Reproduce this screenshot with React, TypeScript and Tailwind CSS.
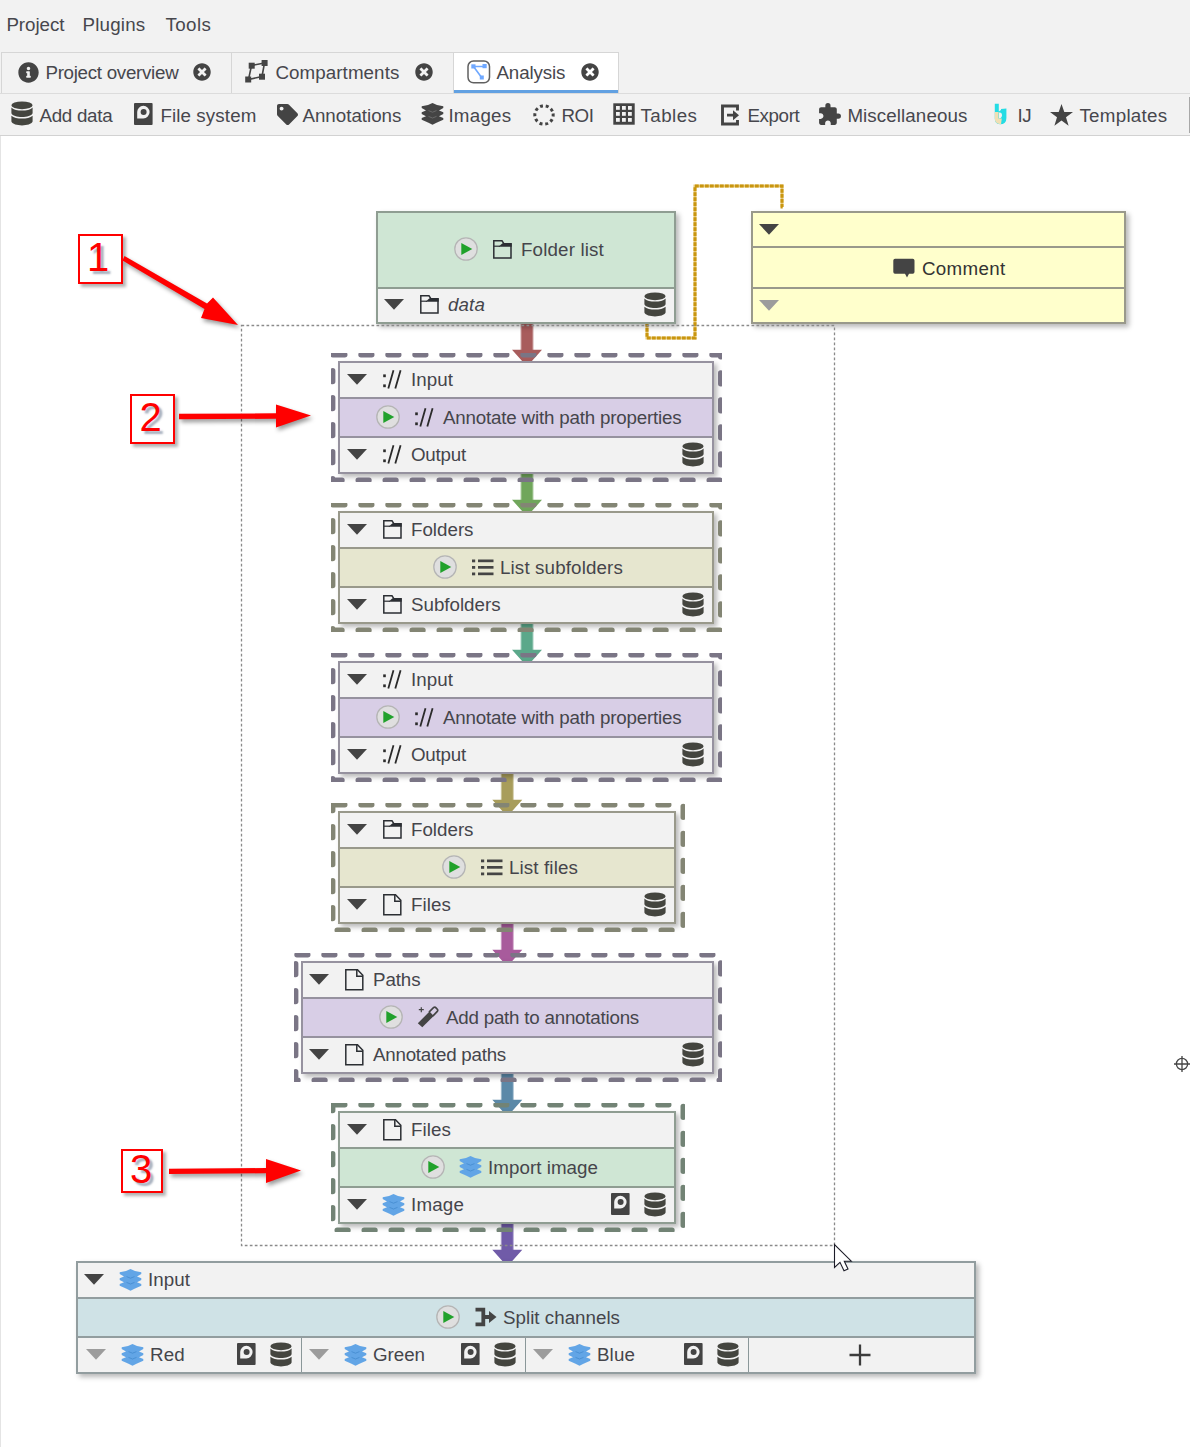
import React, { useLayoutEffect, useRef } from "react";
import { FaInfoCircle, FaTimesCircle, FaTag } from "react-icons/fa";
import { MdExtension } from "react-icons/md";

const INK = "#444444";

/** One line of text, tracked so that it fills the given width. */
function Label({ w, children, className = "" }: { w: number; children: string; className?: string }) {
  const ref = useRef<HTMLSpanElement>(null);
  useLayoutEffect(() => {
    const el = ref.current;
    if (!el) return;
    el.style.letterSpacing = "0px";
    const natural = el.getBoundingClientRect().width;
    el.style.letterSpacing = `${(w + 1 - natural) / children.length}px`;
  }, [w, children]);
  return (
    <span ref={ref} className={`-ml-[0.6px] shrink-0 whitespace-pre text-[18.75px] leading-[24px] ${className}`}>
      {children}
    </span>
  );
}

/* ---------- icons ---------- */

function DbIcon() {
  return (
    <svg width="22" height="25" viewBox="0 0 22 25" className="mb-[2px] shrink-0" fill="#44453f">
      <ellipse cx="11" cy="4.3" rx="10.6" ry="3.9" />
      <path d="M.4 6.5C2.5 9 6.8 9.5 11 9.500S19.500 9 21.600 6.500V12.300C20.500 14.800 16 16 11 16S1.500 14.800.4 12.300Z" />
      <path d="M.4 14.800C2.500 17 6.800 17.600 11 17.600S19.500 17 21.600 14.800V20.600C20.500 23.200 16 24.400 11 24.400S1.500 23.200.4 20.600Z" />
    </svg>
  );
}
function SaveIcon() {
  return (
    <svg width="19" height="22" viewBox="0 0 19 22" className="mb-[2px] shrink-0">
      <rect x="0" y="0" width="18.600" height="22" rx="1" fill={INK} />
      <path d="M9.300 2.800a6.200 6.200 0 0 1 0 12.600H3.200V9A6.200 6.200 0 0 1 9.300 2.800Z" fill="#f2f2f2" />
      <circle cx="9.600" cy="9" r="3" fill={INK} />
    </svg>
  );
}
function FolderIcon() {
  return (
    <svg width="19" height="19" viewBox="0 0 19 19" className="mr-[2px] mb-[1px] shrink-0">
      <path d="M.8.8H9L11 3.800H18V18H.8Z" fill="none" stroke="#2b2e33" strokeWidth="1.500" />
      <path d="M5.500 6.800 9.500 3.200H18.700V6.800Z" fill="#2b2e33" />
      <path d="M.8 6.200H7" fill="none" stroke="#2b2e33" strokeWidth="1.200" />
    </svg>
  );
}
function FileIcon() {
  return (
    <svg width="19" height="22" viewBox="0 0 19 22" className="mr-[2px] mb-[1px] shrink-0" fill="none" stroke="#2b2e33" strokeWidth="1.500">
      <path d="M.8.8H12.500L17.800 6.300V20.800H.8Z" />
      <path d="M11.800 1V7.200H18" />
    </svg>
  );
}
function PathIcon() {
  return (
    <svg width="20" height="20" viewBox="0 0 20 20" className="mr-[4px] mb-[2px] shrink-0" stroke="#2b2b2b" fill="#2b2b2b">
      <rect x="1.200" y="5.400" width="2.600" height="2.800" stroke="none" />
      <rect x="1.200" y="15.400" width="2.600" height="2.800" stroke="none" />
      <path d="M6.300 19.500 11.500 1.200M13.300 19.500 18.600 1.200" strokeWidth="1.800" fill="none" />
    </svg>
  );
}
function LayersIcon({ dark = false }: { dark?: boolean }) {
  const face = dark ? "#444" : "#62a5e6";
  const edge = dark ? "#777" : "#3f86cc";
  return (
    <svg width="23" height="22" viewBox="0 0 23 22" className="mb-[1px] shrink-0">
      <path
        d="M11.500 0 16 2 22.300 3.300V5L18 7.400 22.300 9.200V11L18 13.200 22.300 15V16.700L16 19.500 11.500 21.700 7 19.500 .7 16.700V15L5 13.200 .7 11V9.200L5 7.400 .7 5V3.300L7 2Z"
        fill={face}
      />
      <path d="M7.500 7.600 11.500 9.200 15.500 7.600M7.500 13.400 11.500 15 15.500 13.400" fill="none" stroke={edge} strokeWidth=".7" />
    </svg>
  );
}
function ListIcon() {
  return (
    <svg width="22" height="17" viewBox="0 0 22 17" className="mb-[1px] shrink-0" fill={INK}>
      {[0.5, 7, 13.5].map((y) => (
        <g key={y}>
          <rect x="0" y={y} width="3.200" height="2.800" />
          <rect x="6" y={y} width="15.500" height="2.700" />
        </g>
      ))}
    </svg>
  );
}
function WandIcon() {
  return (
    <svg width="22" height="22" viewBox="0 0 22 22" className="mr-[2px] mb-[2px] shrink-0">
      <path d="M.8 17.300 12.500 5.600 16.800 9.900 5.300 21.300Z" fill={INK} />
      <path d="M12 6.200 16.700 1.500Q18 .8 19 1.800L20.300 3.200Q21.200 4.300 20.300 5.400L16 9.800" fill="none" stroke={INK} strokeWidth="1.700" />
      <path d="M4.300 1.200V6.200M1.800 3.700H6.800" stroke={INK} strokeWidth="1.200" />
    </svg>
  );
}
function SplitIcon() {
  return (
    <svg width="22" height="20" viewBox="0 0 22 20" className="mb-[2px] shrink-0">
      <path d="M.5 2.700H8.300V17.300H.5M8 10H16" fill="none" stroke={INK} strokeWidth="3.800" />
      <path d="M14 4V16L21.500 10Z" fill={INK} />
    </svg>
  );
}
function CommentIcon() {
  return (
    <svg width="22" height="20" viewBox="0 0 22 20" className="shrink-0" fill={INK}>
      <path d="M2 .8H19.800Q21.400 1 21.500 2.600V14Q21.400 15.600 19.800 15.800H16L14 19.400 12 15.800H2Q.4 15.600.3 14V2.600Q.4 1 2 .8Z" />
    </svg>
  );
}
function PlayIcon() {
  return (
    <svg width="24" height="24" viewBox="0 0 24 24" className="mb-[2px] shrink-0">
      <circle cx="12" cy="12" r="11.200" fill="#dfdfdf" stroke="#b5b5b5" strokeWidth="1.300" />
      <path d="M7.300 5.900V18.100L18.300 12Z" fill="#21a12b" />
    </svg>
  );
}
function Triangle({ dim = false }: { dim?: boolean }) {
  return (
    <svg width="20" height="11" viewBox="0 0 20 11" className="mb-px shrink-0">
      <path d="M0 0H20L10 10.700Z" fill={dim ? "#9c9c9c" : INK} />
    </svg>
  );
}
function CompartmentsIcon() {
  return (
    <svg width="23" height="23" viewBox="0 0 23 23" className="mb-[3px] shrink-0">
      <path d="M6.500 5.500 19.500 3 17 16.500 3.500 19.500Z" fill="none" stroke={INK} strokeWidth="1.600" />
      <g fill={INK}>
        <rect x="3.700" y="2.700" width="6" height="6" />
        <rect x="16.600" y="0" width="6" height="6" />
        <rect x="14" y="13.700" width="6" height="6" />
        <rect x=".2" y="16.500" width="6" height="6" />
      </g>
    </svg>
  );
}
function AnalysisIcon() {
  return (
    <svg width="24" height="24" viewBox="0 0 24 24" className="mb-[2px] shrink-0">
      <rect x="1" y="1" width="21.500" height="21.800" rx="5.500" fill="#fff" stroke="#606060" strokeWidth="1.500" />
      <path d="M6.500 6.500H17M6.500 6.500 14.800 17.800" stroke="#6fa8ff" strokeWidth="1.600" />
      <g fill="#6fa8ff">
        <rect x="4.300" y="4.300" width="4.200" height="4.200" />
        <rect x="15.500" y="4" width="4.200" height="4.200" />
        <rect x="12.800" y="15.500" width="4" height="4" />
      </g>
    </svg>
  );
}
function RoiIcon() {
  return (
    <svg width="22" height="22" viewBox="0 0 22 22" className="shrink-0">
      <circle cx="11" cy="11" r="9.200" fill="none" stroke={INK} strokeWidth="3" strokeDasharray="3 2.780" transform="rotate(-9 11 11)" />
    </svg>
  );
}
function TableIcon() {
  return (
    <svg width="22" height="22" viewBox="0 0 22 22" className="mb-px shrink-0">
      <rect x=".3" y=".3" width="21.400" height="21.400" fill={INK} />
      {[3, 9, 15].map((y) => [3, 9, 15].map((x) => <rect key={`${x}-${y}`} x={x} y={y} width="3.800" height="3.800" fill="#f2f2f2" />))}
    </svg>
  );
}
function ExportIcon() {
  return (
    <svg width="20" height="22" viewBox="0 0 20 22" className="-ml-px mr-px shrink-0">
      <path d="M17.500 6.500V2H2.500V20H17.500V16" fill="none" stroke={INK} strokeWidth="2.900" />
      <path d="M7 9.800H13V6.200L19 11.200 13 16.200V12.600H7Z" fill={INK} />
    </svg>
  );
}
function IjIcon() {
  return (
    <svg width="13" height="22" viewBox="0 0 13 22" className="mb-px shrink-0">
      <path d="M.8.8H4.800V8.500L7 7V6L12.400 5.500V15Q12.400 21.300 6 21.300.8 21 .8 15.500Z" fill="#25dce4" />
      <path d="M5 9.500Q8 9 8 12.500 7.500 15.500 5 15.500Z" fill="#f2f2f2" />
      <path d="M.8 9H4.600V15.500H7.800L7 21.200Q.8 21 .8 15.500Z" fill="#f0dfb4" />
    </svg>
  );
}
function StarIcon() {
  return (
    <svg width="23" height="22" viewBox="0 0 23 22" className="shrink-0">
      <path d="M11.500 0 14.300 8H23L16 13.200 18.600 21.700 11.500 16.600 4.400 21.700 7 13.200 0 8H8.700Z" fill={INK} />
    </svg>
  );
}

/* ---------- header ---------- */

const TOOLS: { text: string; w: number; box: string; icon: React.ReactNode; gap: string }[] = [
  { text: "Add data", w: 72, box: "w-[123px]", icon: <DbIcon />, gap: "gap-[7px]" },
  { text: "File system", w: 95, box: "w-[143px]", icon: <SaveIcon />, gap: "gap-[8px]" },
  { text: "Annotations", w: 98, box: "w-[144px]", icon: <FaTag size={21} color={INK} />, gap: "gap-[5px]" },
  { text: "Images", w: 62, box: "w-[112px]", icon: <LayersIcon dark />, gap: "gap-[5px]" },
  { text: "ROI", w: 31, box: "w-[80px]", icon: <RoiIcon />, gap: "gap-[7px]" },
  { text: "Tables", w: 56, box: "w-[108px]", icon: <TableIcon />, gap: "gap-[6px]" },
  { text: "Export", w: 51, box: "w-[96px]", icon: <ExportIcon />, gap: "gap-[7px]" },
  { text: "Miscellaneous", w: 119, box: "w-[177px]", icon: <MdExtension size={25} color={INK} />, gap: "gap-[6px]" },
  { text: "IJ", w: 13, box: "w-[56px]", icon: <IjIcon />, gap: "gap-[11px]" },
  { text: "Templates", w: 87, box: "w-[120px]", icon: <StarIcon />, gap: "gap-[7px]" },
];

function Header() {
  return (
    <header className="bg-[#f2f2f2]">
      <nav className="flex h-[52px] items-center pb-[2px] pl-[7px]">
        <div className="w-[76px]"><Label w={57}>Project</Label></div>
        <div className="w-[83px]"><Label w={62}>Plugins</Label></div>
        <div><Label w={45}>Tools</Label></div>
      </nav>
      <div className="flex h-[42px] border-b border-[#dcdcdc] pl-px">
        <div className="flex w-[230px] items-center border-t border-l border-[#d6d6d6] pl-[16px]">
          <FaInfoCircle size={21} color={INK} className="mb-[2px]" />
          <div className="ml-[7px] w-[147px]"><Label w={132}>Project overview</Label></div>
          <FaTimesCircle size={18} color={INK} className="mb-[2px]" />
        </div>
        <div className="flex w-[222px] items-center border-t border-l border-[#d6d6d6] pl-[13px]">
          <CompartmentsIcon />
          <div className="ml-[8px] w-[139px]"><Label w={123}>Compartments</Label></div>
          <FaTimesCircle size={18} color={INK} className="mb-[2px]" />
        </div>
        <div className="flex w-[166px] items-center border-x border-t border-[#d6d6d6] bg-white pl-[13px] shadow-[inset_0_-3px_0_#62a1e2]">
          <AnalysisIcon />
          <div className="ml-[6px] w-[84px]"><Label w={68}>Analysis</Label></div>
          <FaTimesCircle size={18} color={INK} className="mb-[2px]" />
        </div>
      </div>
      <div className="flex h-[42px] items-center border-b border-[#d2d2d2] pl-[11px]">
        {TOOLS.map((t) => (
          <div key={t.text} className={`flex shrink-0 items-center ${t.box} ${t.gap}`}>
            {t.icon}
            <Label w={t.w} className="pt-[2px]">{t.text}</Label>
          </div>
        ))}
        <div className="ml-[19px] h-[36px] w-px bg-[#a8a8a8]" />
      </div>
    </header>
  );
}

/* ---------- nodes ---------- */

function Slot({ icon, text, w, italic }: { icon: React.ReactNode; text: string; w: number; italic?: boolean }) {
  return (
    <>
      <div className="flex w-[23px] shrink-0 items-center justify-center">{icon}</div>
      <Label w={w} className={`ml-[6px] text-[#45454b] ${italic ? "italic" : ""}`}>{text}</Label>
    </>
  );
}

function SlotRow({ dim, icon, text, w, italic, save, db, className = "" }: {
  dim?: boolean; icon?: React.ReactNode; text?: string; w?: number; italic?: boolean; save?: boolean; db?: boolean; className?: string;
}) {
  return (
    <div className={`flex min-h-0 flex-1 items-center bg-[#f2f2f2] pr-[8px] pl-[6px] ${className}`}>
      <Triangle dim={dim} />
      <div className="w-[15px] shrink-0" />
      {text && <Slot icon={icon} text={text} w={w ?? 0} italic={italic} />}
      <div className="ml-auto flex items-center gap-[14px]">
        {save && <SaveIcon />}
        {db && <DbIcon />}
      </div>
    </div>
  );
}

function RunRow({ icon, text, w, className }: { icon: React.ReactNode; text: string; w: number; className: string }) {
  return (
    <div className={`flex shrink-0 items-center ${className}`}>
      <PlayIcon />
      <div className="w-[14px] shrink-0" />
      <Slot icon={icon} text={text} w={w} />
    </div>
  );
}

function Dashes({ w, color }: { w: number; color: string }) {
  const W = w + 15.4;
  const H = 129;
  return (
    <svg width={W} height={H} className="absolute -top-[8px] -left-[7px] overflow-hidden">
      <path
        d={`M3 1.700H${W - 1.7}V${H - 1.7}H1.700V1.700H3`}
        fill="none"
        stroke={color}
        strokeWidth="5.400"
        strokeLinecap="round"
        strokeDasharray="10.800 16.200"
      />
    </svg>
  );
}

const SHADOW = "shadow-[3px_3px_5px_rgba(0,0,0,0.28)]";

interface NodeProps {
  at: string; w: number; line: string; dash: string; input: React.ReactNode; run: React.ReactNode; output: React.ReactNode;
}
function Node({ at, w, line, dash, input, run, output }: NodeProps) {
  return (
    <div className={`absolute h-[113px] ${at}`}>
      <div className={`flex h-full flex-col divide-y-2 border-2 ${line} ${SHADOW}`}>
        {input}
        {run}
        {output}
      </div>
      <Dashes w={w} color={dash} />
    </div>
  );
}

const PURPLE = { line: "divide-[#96929f] border-[#96929f]", dash: "#7a7585" };
const OLIVE = { line: "divide-[#99998b] border-[#99998b]", dash: "#838574" };
const GREEN = { line: "divide-[#8f9d92] border-[#8f9d92]", dash: "#728375" };

function FlowArrow({ x, y, color }: { x: number; y: number; color: string }) {
  return (
    <g transform={`translate(${x} ${y})`}>
      <rect x="-6.500" y="0" width="13" height="28" fill={color} opacity=".55" />
      <path d="M-5.500 0H5.500V26.800H15L0 43.500-15 26.800H-5.500Z" fill={color} />
    </g>
  );
}

function Callout({ at, children }: { at: string; children: string }) {
  return (
    <div className={`absolute flex items-center justify-center border-2 border-[#f00] bg-white font-[Liberation_Sans] text-[40px] leading-none text-[#f00] shadow-[3px_3px_3px_rgba(0,0,0,0.3)] [text-shadow:3px_3px_2px_rgba(60,80,110,0.45)] ${at}`}>
      {children}
    </div>
  );
}

export default function App() {
  return (
    <div className="flex h-[1447px] w-[1190px] flex-col overflow-hidden bg-white font-['Liberation_Sans',Arial,sans-serif] text-[#47474d]">
      <Header />
      <main className="relative -mt-[136px] flex-1 pt-[136px]">
        <div className="absolute top-[136px] bottom-0 left-0 w-px bg-[#e4e4e4]" />

        {/* connections between nodes */}
        <svg className="absolute top-0 left-0" width="1190" height="1447">
          <FlowArrow x={527} y={323} color="#a85c5c" />
          <FlowArrow x={527} y={473} color="#70a65b" />
          <FlowArrow x={527} y={623} color="#5ba88a" />
          <FlowArrow x={507.3} y={773} color="#a89d5b" />
          <FlowArrow x={507.3} y={923} color="#a85b9c" />
          <FlowArrow x={507.3} y={1073} color="#5b89a8" />
          <FlowArrow x={507.3} y={1223} color="#705ba8" />
          <g fill="none" strokeWidth="3">
            <path d="M647 323V338H695V186H782V207" stroke="#e6c878" />
            <path d="M647 323V338H695V186H782V207H784" stroke="#c9960f" strokeDasharray="3.700 1.300" />
          </g>
        </svg>

        {/* folder list */}
        <div className={`absolute top-[211px] left-[376px] flex h-[113px] w-[300px] flex-col divide-y-2 divide-[#8f9d92] border-2 border-[#8f9d92] ${SHADOW}`}>
          <RunRow className="h-[76px] bg-[#cfe6d4] pl-[76px]" icon={<FolderIcon />} text="Folder list" w={82} />
          <SlotRow className="pb-px" icon={<FolderIcon />} text="data" w={36} italic db />
        </div>

        {/* comment */}
        <div className={`absolute top-[211px] left-[751px] flex h-[113px] w-[375px] flex-col divide-y-2 divide-[#99998b] border-2 border-[#99998b] bg-[#ffffcc] ${SHADOW}`}>
          <SlotRow className="bg-transparent!" />
          <div className="flex h-[41px] shrink-0 items-center pt-px pl-[140px]">
            <CommentIcon />
            <Label w={82.5} className="ml-[7px] pt-px text-[#333]">Comment</Label>
          </div>
          <SlotRow dim className="bg-transparent!" />
        </div>

        <Node at="top-[361px] left-[338px] w-[376px]" w={376} {...PURPLE}
          input={<SlotRow className="pl-[7px]!" icon={<PathIcon />} text="Input" w={41} />}
          run={<RunRow className="h-[39px] bg-[#d8cee6] pl-[36px]" icon={<PathIcon />} text="Annotate with path properties" w={237.5} />}
          output={<SlotRow className="pl-[7px]!" icon={<PathIcon />} text="Output" w={54} db />} />
        <Node at="top-[511px] left-[338px] w-[376px]" w={376} {...OLIVE}
          input={<SlotRow className="pl-[7px]!" icon={<FolderIcon />} text="Folders" w={61.5} />}
          run={<RunRow className="h-[39px] bg-[#e6e6cf] pl-[93px]" icon={<ListIcon />} text="List subfolders" w={122} />}
          output={<SlotRow className="pl-[7px]!" icon={<FolderIcon />} text="Subfolders" w={88.5} db />} />
        <Node at="top-[661px] left-[338px] w-[376px]" w={376} {...PURPLE}
          input={<SlotRow className="pl-[7px]!" icon={<PathIcon />} text="Input" w={41} />}
          run={<RunRow className="h-[39px] bg-[#d8cee6] pl-[36px]" icon={<PathIcon />} text="Annotate with path properties" w={237.5} />}
          output={<SlotRow className="pl-[7px]!" icon={<PathIcon />} text="Output" w={54} db />} />
        <Node at="top-[811px] left-[338px] w-[338px]" w={338.5} {...OLIVE}
          input={<SlotRow className="pl-[7px]!" icon={<FolderIcon />} text="Folders" w={61.5} />}
          run={<RunRow className="h-[39px] bg-[#e6e6cf] pl-[102px]" icon={<ListIcon />} text="List files" w={68} />}
          output={<SlotRow className="pl-[7px]!" icon={<FileIcon />} text="Files" w={39} db />} />
        <Node at="top-[961px] left-[301px] w-[413px]" w={413} {...PURPLE}
          input={<SlotRow icon={<FileIcon />} text="Paths" w={46.5} />}
          run={<RunRow className="h-[39px] bg-[#d8cee6] pl-[76px]" icon={<WandIcon />} text="Add path to annotations" w={192} />}
          output={<SlotRow icon={<FileIcon />} text="Annotated paths" w={132} db />} />
        <Node at="top-[1111px] left-[338px] w-[338px]" w={338.5} {...GREEN}
          input={<SlotRow className="pl-[7px]!" icon={<FileIcon />} text="Files" w={39} />}
          run={<RunRow className="h-[39px] bg-[#cfe6d4] pl-[81px]" icon={<LayersIcon />} text="Import image" w={109} />}
          output={<SlotRow className="pl-[7px]!" icon={<LayersIcon />} text="Image" w={52} save db />} />

        {/* split channels */}
        <div className={`absolute top-[1261px] left-[76px] flex h-[113px] w-[900px] flex-col divide-y-2 divide-[#929d9f] border-2 border-[#929d9f] ${SHADOW}`}>
          <SlotRow icon={<LayersIcon />} text="Input" w={41} />
          <RunRow className="h-[39px] bg-[#cfe2e6] pl-[358px]" icon={<SplitIcon />} text="Split channels" w={116} />
          <div className="flex min-h-0 flex-1 divide-x divide-[#8a9799] bg-[#f2f2f2]">
            <div className="flex w-[224px]"><SlotRow dim className="pr-[9px]! pl-[8px]!" icon={<LayersIcon />} text="Red" w={34} save db /></div>
            <div className="flex w-[224px]"><SlotRow dim className="pr-[9px]! pl-[7px]!" icon={<LayersIcon />} text="Green" w={51} save db /></div>
            <div className="flex w-[223px]"><SlotRow dim className="pr-[9px]! pl-[7px]!" icon={<LayersIcon />} text="Blue" w={37} save db /></div>
            <div className="flex flex-1 items-center justify-center pr-[3px] pb-px">
              <svg width="22" height="22" viewBox="0 0 22 22"><path d="M11 .5V21.500M.5 11H21.500" stroke="#3c3c3c" strokeWidth="2.300" /></svg>
            </div>
          </div>
        </div>

        <Callout at="top-[234px] left-[78px] h-[50px] w-[45px] pr-[5px] pb-[4px]">1</Callout>
        <Callout at="top-[394px] left-[130px] h-[50px] w-[45px] pr-[4px] pb-[4px]">2</Callout>
        <Callout at="top-[1149px] left-[121px] h-[44px] w-[42px] pr-[2px] pb-[5px]">3</Callout>

        {/* pointers, rubber band, cursor and origin marker */}
        <svg className="absolute top-0 left-0" width="1190" height="1447">
          <rect x="241.500" y="325.500" width="593" height="920" fill="none" stroke="#8a8a8a" strokeWidth="1.300" strokeDasharray="2.700 2.300" />
          <g fill="#f00" className="drop-shadow-[2px_3px_2px_rgba(0,0,0,0.4)]">
            <path d="M124.500 256 207 303.500 213 297.500 238 325 201 318 204.500 309 122.500 260.500Z" />
            <path d="M179 413.800 276 413.300V404.500L311 415.500 276 427.500V418.700L179 419.300Z" />
            <path d="M169 1168.800 266 1168V1159L301 1170.500 266 1183V1173.300L169 1174Z" />
          </g>
          <path d="M834.500 1244.500V1267.500L840 1262.300 844 1270.700 848 1269 844.300 1261.200H851.300Z" fill="#fff" stroke="#1c1c28" strokeWidth="1.100" />
          <g fill="none" stroke="#444" strokeWidth="1.300">
            <circle cx="1182" cy="1064" r="5.600" />
            <path d="M1182 1056V1072M1174 1064H1190" />
          </g>
        </svg>
      </main>
    </div>
  );
}
